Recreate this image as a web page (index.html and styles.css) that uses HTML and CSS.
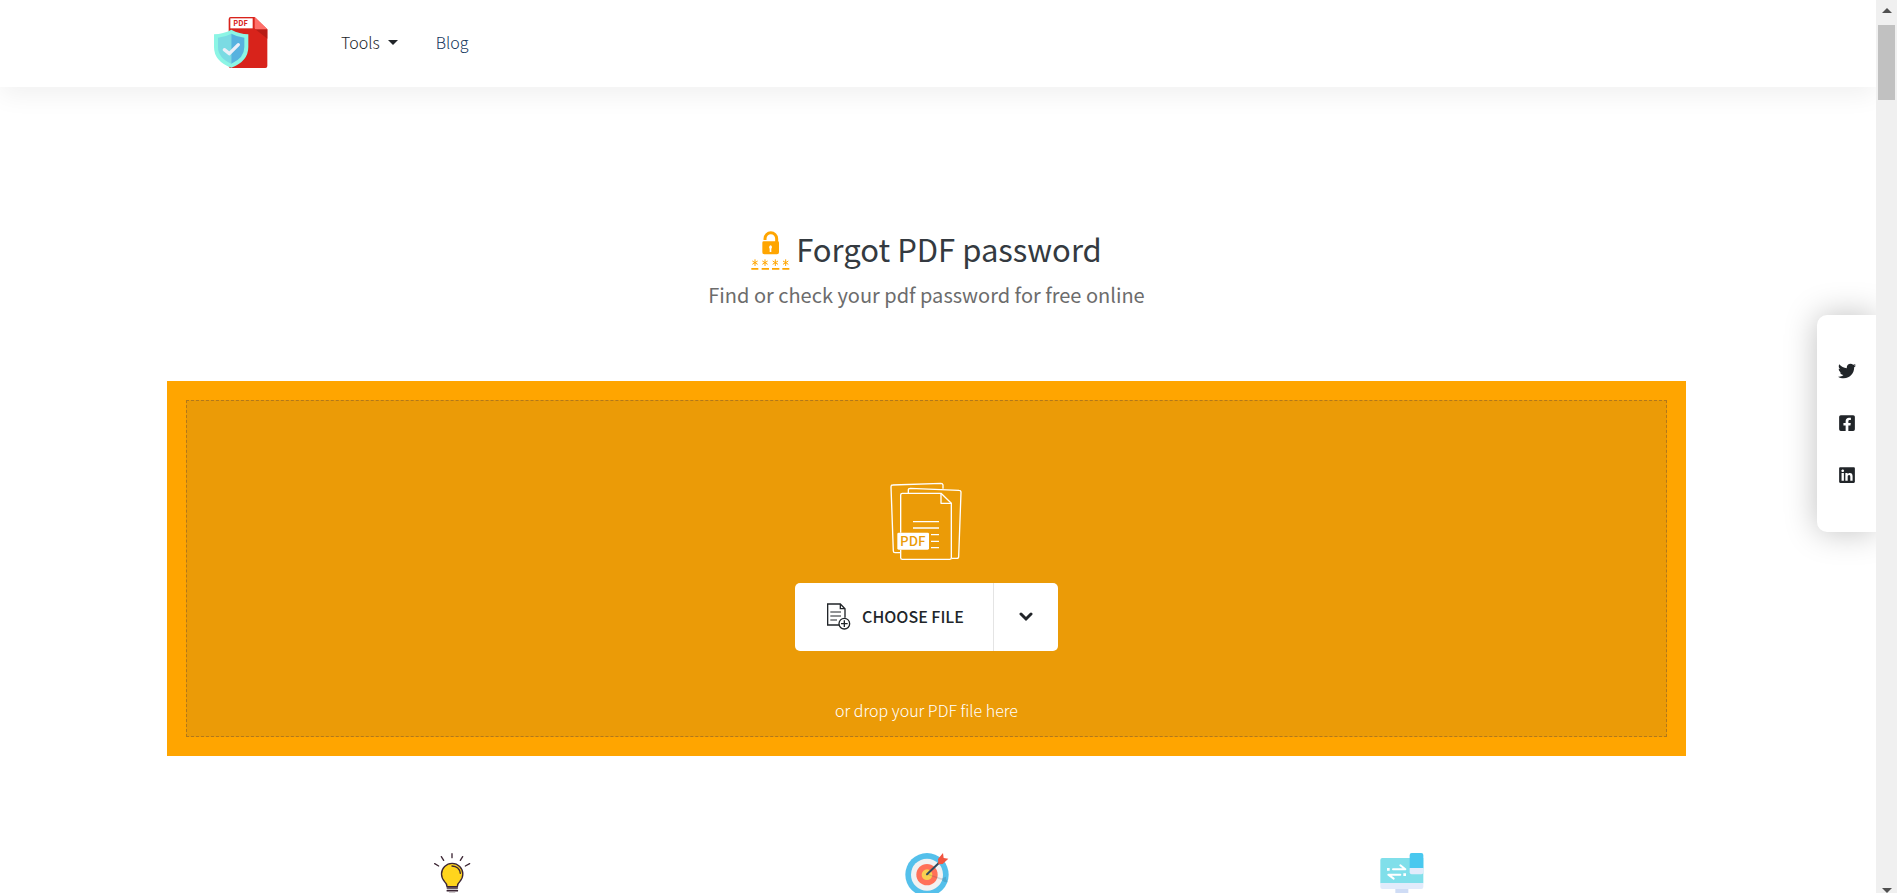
FILE: index.html
```html
<!DOCTYPE html>
<html lang="en">

<head>
    <meta charset="UTF-8">
    <meta name="viewport" content="width=device-width, initial-scale=1.0">
    <title>Forgot PDF password</title>
    <link rel="stylesheet" href="styles.css">
</head>

<body>
    <div class="page">
        <header class="site-header">
            <nav class="container nav">
                <a href="#" class="logo" aria-label="Home">
                    <svg viewBox="42 24 162 159" width="54" height="53">
                        <path fill="#d8231b" d="M92 27h72l38 37v110q0 6-6 6H92q-6 0-6-6V33q0-6 6-6z" />
                        <path fill="#b71c16" d="M166 64h36v28z" />
                        <path fill="#ff6f69" d="M164 27l38 37h-33q-5 0-5-5z" />
                        <path fill="#fff" d="M91 31h67v30H91z" />
                        <text x="100" y="55" class="logo-text">PDF</text>
                        <path fill="#8cf5e5" d="M94 65q24 13 51 14v38q0 43-51 62-52-19-52-62V79q28-1 52-14z" />
                        <path fill="#7bdbe3" d="M94 77q-18 10-40 12v28q0 33 40 50z" />
                        <path fill="#57b2df" d="M94 77q18 10 39 12v28q0 33-39 50z" />
                        <path fill="none" stroke="#eceff8" stroke-width="10" stroke-linecap="round" stroke-linejoin="round" d="M73 125l15 12 27-27" />
                    </svg>
                </a>
                <button type="button" class="nav-link">Tools <span class="caret"></span></button>
                <a href="#" class="nav-link blog">Blog</a>
            </nav>
        </header>

        <main>
            <div class="title">
                <svg viewBox="29 18 117 120" width="39" height="40" fill="#ffa500">
                    <path fill="none" stroke="#ffa500" stroke-width="9" d="M71 45v-4a17 17 0 0 1 35 0v10" />
                    <path fill-rule="evenodd" d="M67 49h42q4 0 4 4v29q0 6-6 6H69q-6 0-6-6V53q0-4 4-4zm21 12a6 6 0 0 0-3 10v10h5V71a6 6 0 0 0-2-10z" />
                    <path d="M30 129h21v5H30zM61 129h22v5H61zM92 129h22v5H92zM123 129h21v5h-21z" />
                    <path fill="none" stroke="#ffa500" stroke-width="3"
                        d="M41 103v20M33 108l16 10M33 118l16-10M71 103v20M63 108l16 10M63 118l16-10M102 103v20M94 108l16 10M94 118l16-10M133 103v20M125 108l16 10M125 118l16-10" />
                </svg>
                <h1>Forgot PDF password</h1>
            </div>
            <p class="subtitle">Find or check your pdf password for free online</p>

            <section class="upload">
                <div class="drop-zone">
                    <svg viewBox="33 36 216 237" width="72" height="79" fill="none" stroke="#fff" stroke-width="4" stroke-linejoin="round">
                        <path d="M65 248H48q-5 0-5-5L36 50q0-5 5-5l145-5q5 0 6 5v11" />
                        <path d="M88 69v-9q0-5 6-5l146 6q6 0 6 6l-7 193q0 5-6 5h-15" />
                        <path d="M65 188V75q0-5 5-5h116l31 30v163q0 5-5 5H70q-5 0-5-5v-24" />
                        <path d="M186 70v30h31M102 155h78M102 174h78M156 194h24M156 214h24M156 233h24" />
                        <path fill="#fff" stroke="none" d="M59 188h87q4 0 4 4v43q0 4-4 4H59q-4 0-4-4v-43q0-4 4-4z" />
                        <text x="63" y="228" class="doc-text">PDF</text>
                    </svg>

                    <div class="choose">
                        <button type="button" class="choose-file">
                            <svg viewBox="145 100 72 81" width="24" height="27" fill="none" stroke="#212529" stroke-width="4">
                                <path d="M182 166h-35v-63h38l14 14v27M185 103v14h14" />
                                <path stroke-width="3" d="M155 127h32M155 139h32M155 151h20" />
                                <circle cx="197" cy="162" r="16" />
                                <path d="M197 152v20M187 162h20" />
                            </svg>
                            CHOOSE FILE
                        </button>
                        <button type="button" class="choose-more" aria-label="More sources">
                            <svg viewBox="0 0 14 10" width="14" height="10" fill="none" stroke="#212529" stroke-width="3">
                                <path stroke-linecap="round" d="M2 2l5 5 5-5" />
                            </svg>
                        </button>
                    </div>

                    <p class="drop-hint">or drop your PDF file here</p>
                </div>
            </section>

            <section class="container features">
                <div class="feature">
                    <svg viewBox="22 39 144 144" width="48" height="48" fill="none" stroke="#3b2533" stroke-width="4" stroke-linecap="round">
                        <path d="M94 41v12M62 50l7 11M126 50l-7 11M42 71l12 7M147 71l-13 7" />
                        <path fill="#ffd51d" d="M79 140q0-9-7-15a32 32 0 1 1 45 0q-7 6-7 15z" />
                        <path d="M94 78q22 1 25 22" />
                        <path stroke-width="5" d="M80 144h30M80 152h30M86 161h17" />
                    </svg>
                </div>
                <div class="feature">
                    <svg viewBox="38 39 144 144" width="48" height="48">
                        <circle cx="110" cy="104" r="65" fill="#54c0eb" />
                        <circle cx="110" cy="104" r="48" fill="#f1f1f1" />
                        <circle cx="110" cy="104" r="32" fill="#ff7058" />
                        <circle cx="110" cy="104" r="16" fill="#f8cf50" />
                        <path fill="#324a5e" opacity=".18" d="M112 101l42 14 13-5v8l7 9-12-1-8-6-43-16z" />
                        <path stroke="#324a5e" stroke-width="6" stroke-linecap="round" d="M110 103l38-36" />
                        <path fill="#f1543f" d="M143 57l15-18 2 15 14 2-17 16-13 1z" />
                    </svg>
                </div>
                <div class="feature">
                    <svg viewBox="53 39 144 144" width="48" height="48">
                        <path fill="#80dfea" d="M66 54h123v76H60V60q0-6 6-6z" />
                        <path fill="#e1ebfb" d="M60 129h129v12q0 6-6 6H66q-6 0-6-6z" />
                        <path fill="#cfdcf5" d="M105 147h39v30h-39z" />
                        <path fill="#49c8ef" d="M154 39h29q6 0 6 6v40h-41V45q0-6 6-6z" />
                        <path fill="#e1ebfb" d="M148 84h41v13q0 6-6 6h-29q-6 0-6-6z" />
                        <path fill="none" stroke="#fff" stroke-width="6" stroke-linecap="round" stroke-linejoin="round" d="M98 88h37l-15-12M120 104H84l16 12" />
                        <path fill="#fff" d="M80 84h8v8h-8zM129 100h8v8h-8z" />
                    </svg>
                </div>
            </section>
        </main>
    </div>

    <aside class="social">
        <a href="#" aria-label="Twitter">
            <svg viewBox="0 0 512 512" width="18" height="18">
                <path d="M459.37 151.716c.325 4.548.325 9.097.325 13.645 0 138.72-105.583 298.558-298.558 298.558-59.452 0-114.68-17.219-161.137-47.106 8.447.974 16.568 1.299 25.34 1.299 49.055 0 94.213-16.568 130.274-44.832-46.132-.975-84.792-31.188-98.112-72.772 6.498.974 12.995 1.624 19.818 1.624 9.421 0 18.843-1.3 27.614-3.573-48.081-9.747-84.143-51.98-84.143-102.985v-1.299c13.969 7.797 30.214 12.67 47.431 13.319-28.264-18.843-46.781-51.005-46.781-87.391 0-19.492 5.197-37.36 14.294-52.954 51.655 63.675 129.3 105.258 216.365 109.807-1.624-7.797-2.599-15.918-2.599-24.04 0-57.828 46.782-104.934 104.934-104.934 30.213 0 57.502 12.67 76.67 33.137 23.715-4.548 46.456-13.32 66.599-25.34-7.798 24.366-24.366 44.833-46.132 57.827 21.117-2.273 41.584-8.122 60.426-16.243-14.292 20.791-32.161 39.308-52.628 54.253z" />
            </svg>
        </a>
        <a href="#" aria-label="Facebook">
            <svg viewBox="0 0 448 512" width="16" height="18">
                <path d="M400 32H48A48 48 0 0 0 0 80v352a48 48 0 0 0 48 48h137.25V327.69h-63V256h63v-54.64c0-62.15 37-96.48 93.67-96.48 27.14 0 55.52 4.84 55.52 4.84v61h-31.27c-30.81 0-40.42 19.12-40.42 38.73V256h68.78l-11 71.69h-57.78V480H400a48 48 0 0 0 48-48V80a48 48 0 0 0-48-48z" />
            </svg>
        </a>
        <a href="#" aria-label="LinkedIn">
            <svg viewBox="0 0 448 512" width="16" height="18">
                <path d="M416 32H31.9C14.3 32 0 46.5 0 64.3v383.4C0 465.5 14.3 480 31.9 480H416c17.6 0 32-14.5 32-32.3V64.3c0-17.8-14.4-32.3-32-32.3zM135.4 416H69V202.2h66.5V416zm-33.2-243c-21.3 0-38.5-17.3-38.5-38.5S80.9 96 102.2 96c21.2 0 38.5 17.3 38.5 38.5 0 21.3-17.2 38.5-38.5 38.5zm282.1 243h-66.4V312c0-24.8-.5-56.7-34.5-56.7-34.6 0-39.9 27-39.9 54.9V416h-66.4V202.2h63.7v29.2h.9c8.9-16.8 30.6-34.5 62.2-34.5 66.5 0 78.9 43.8 78.9 100.9V416z" />
            </svg>
        </a>
    </aside>

    <div class="scrollbar" aria-hidden="true">
        <span class="arrow-up"></span>
        <span class="thumb"></span>
        <span class="arrow-down"></span>
    </div>
</body>

</html>
```
FILE: styles.css
```css
* {
    margin: 0;
    padding: 0;
    box-sizing: border-box;
}

body {
    display: flex;
    height: 100vh;
    overflow: hidden;
    background: #fff;
    color: #212529;
    font-family: "Noto Sans CJK SC", "Open Sans", sans-serif;
    font-size: 16px;
    line-height: 24px;
}

button {
    border: none;
    background: none;
    color: inherit;
    font: inherit;
    cursor: pointer;
}

a {
    color: inherit;
    text-decoration: none;
}

svg {
    display: block;
    flex-shrink: 0;
}

.page {
    flex: 1;
    min-width: 0;
    overflow: hidden;
}

.container {
    width: 90%;
    max-width: 1425px;
    margin: 0 auto;
}

/* header */
.site-header {
    padding-right: 23px;
    box-shadow: 0 8px 24px rgba(0, 0, 0, 0.06);
}

.nav {
    display: flex;
    align-items: center;
    height: 87px;
    padding-bottom: 3px;
}

.logo {
    margin-right: 73px;
}

.logo-text {
    fill: #d8231b;
    font-size: 22px;
    font-weight: 700;
}

.nav-link {
    display: flex;
    align-items: center;
    gap: 8px;
    font-weight: 300;
}

.blog {
    margin-left: 38px;
    color: #12355b;
}

.caret {
    border-top: 5px solid #212529;
    border-left: 5px solid transparent;
    border-right: 5px solid transparent;
}

/* main */
main {
    padding: 140px 23px 0 0;
}

.title {
    display: flex;
    align-items: center;
    justify-content: center;
    gap: 6px;
    height: 48px;
}

h1 {
    padding-bottom: 4px;
    color: #343a40;
    font-size: 31px;
    font-weight: 400;
    line-height: 44px;
}

.subtitle {
    margin: 4px 0 70px;
    color: #6c6c6c;
    font-size: 20px;
    line-height: 32px;
    text-align: center;
}

.upload {
    width: 82%;
    margin: 0 auto;
    padding: 19px;
    background: #ffa500;
}

.drop-zone {
    display: flex;
    flex-direction: column;
    align-items: center;
    padding: 81px 0 14px;
    border: 1px dashed #b1781b;
    background: #eb9b07;
}

.doc-text {
    fill: #eb9b07;
    stroke: none;
    font-size: 40px;
    font-weight: 500;
}

.choose {
    display: flex;
    height: 68px;
    margin: 22px 0 47px;
    border-radius: 5px;
    background: #fff;
}

.choose-file {
    display: flex;
    align-items: center;
    gap: 11px;
    padding: 0 29px 2px 32px;
    font-weight: 500;
}

.choose-more {
    display: flex;
    align-items: center;
    justify-content: center;
    width: 65px;
    border-left: 1px solid #e4e4e4;
}

.drop-hint {
    color: #fff;
    font-weight: 300;
}

.features {
    display: grid;
    grid-template-columns: repeat(3, 1fr);
    justify-items: center;
    margin-top: 97px;
}

/* share panel, over the page */
.social {
    position: fixed;
    top: 315px;
    right: 21px;
    display: flex;
    flex-direction: column;
    align-items: center;
    gap: 34px;
    width: 59px;
    padding: 47px 0 48px;
    border-radius: 10px 0 0 10px;
    background: #fff;
    box-shadow: 0 0 32px rgba(0, 0, 0, 0.25);
    fill: #212529;
}

/* scrollbar */
.scrollbar {
    position: relative;
    display: flex;
    flex-direction: column;
    align-items: center;
    width: 21px;
    padding-top: 8px;
    background: #f0f0f0;
}

.arrow-up,
.arrow-down {
    border-left: 5px solid transparent;
    border-right: 5px solid transparent;
}

.arrow-up {
    border-bottom: 5px solid #505050;
}

.thumb {
    width: 17px;
    height: 75px;
    margin-top: 12px;
    background: #c1c1c1;
}

.arrow-down {
    margin-top: auto;
    border-top: 5px solid #505050;
}
```
